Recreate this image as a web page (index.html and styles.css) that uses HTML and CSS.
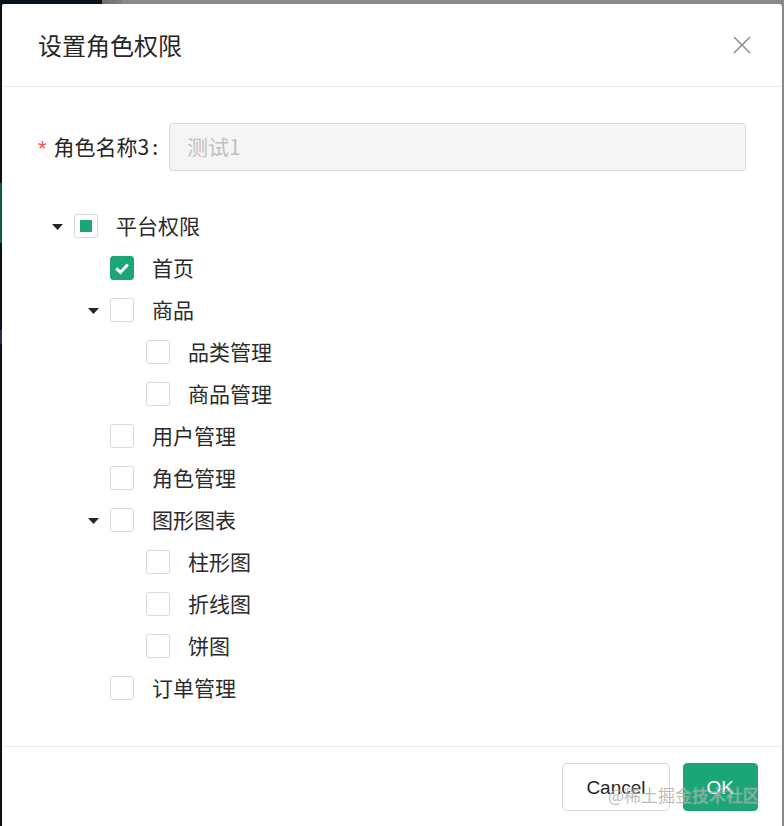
FILE: index.html
```html
<!DOCTYPE html>
<html lang="zh-CN">
<head>
<meta charset="utf-8">
<title>设置角色权限</title>
<link rel="stylesheet" href="styles.css">
</head>
<body>
<div class="screen">
  <div class="topbar"></div>
  <div class="stage">
    <div class="side"></div>
    <div class="modal">
      <div class="modal-header">
        <div class="title">设置角色权限</div>
        <span class="close" aria-label="Close">
          <svg width="18" height="18" viewBox="0 0 18 18"><path d="M1 1 L17 17 M17 1 L1 17" stroke="#8f8f8f" stroke-width="1.6" fill="none"/></svg>
        </span>
      </div>
      <div class="modal-body">
        <div class="form-item">
          <label class="label"><span class="req">*</span>角色名称3<span class="colon">:</span></label>
          <div class="input">测试1</div>
        </div>
        <ul class="tree">
          <li class="node">
            <span class="switcher"><svg width="11" height="6" viewBox="0 0 11 6"><path d="M0 0 H11 L5.5 6 Z" fill="#262626"/></svg></span>
            <span class="cb indeterminate"></span>
            <span class="node-title">平台权限</span>
          </li>
          <li class="node">
            <span class="indent"></span><span class="switcher"></span>
            <span class="cb checked"><svg width="24" height="24" viewBox="0 0 24 24"><path d="M6.2 12.4 L10.4 16.4 L17.8 8.4" stroke="#fff" stroke-width="3" fill="none"/></svg></span>
            <span class="node-title">首页</span>
          </li>
          <li class="node">
            <span class="indent"></span>
            <span class="switcher"><svg width="11" height="6" viewBox="0 0 11 6"><path d="M0 0 H11 L5.5 6 Z" fill="#262626"/></svg></span>
            <span class="cb"></span>
            <span class="node-title">商品</span>
          </li>
          <li class="node">
            <span class="indent"></span><span class="indent"></span><span class="switcher"></span>
            <span class="cb"></span>
            <span class="node-title">品类管理</span>
          </li>
          <li class="node">
            <span class="indent"></span><span class="indent"></span><span class="switcher"></span>
            <span class="cb"></span>
            <span class="node-title">商品管理</span>
          </li>
          <li class="node">
            <span class="indent"></span><span class="switcher"></span>
            <span class="cb"></span>
            <span class="node-title">用户管理</span>
          </li>
          <li class="node">
            <span class="indent"></span><span class="switcher"></span>
            <span class="cb"></span>
            <span class="node-title">角色管理</span>
          </li>
          <li class="node">
            <span class="indent"></span>
            <span class="switcher"><svg width="11" height="6" viewBox="0 0 11 6"><path d="M0 0 H11 L5.5 6 Z" fill="#262626"/></svg></span>
            <span class="cb"></span>
            <span class="node-title">图形图表</span>
          </li>
          <li class="node">
            <span class="indent"></span><span class="indent"></span><span class="switcher"></span>
            <span class="cb"></span>
            <span class="node-title">柱形图</span>
          </li>
          <li class="node">
            <span class="indent"></span><span class="indent"></span><span class="switcher"></span>
            <span class="cb"></span>
            <span class="node-title">折线图</span>
          </li>
          <li class="node">
            <span class="indent"></span><span class="indent"></span><span class="switcher"></span>
            <span class="cb"></span>
            <span class="node-title">饼图</span>
          </li>
          <li class="node">
            <span class="indent"></span><span class="switcher"></span>
            <span class="cb"></span>
            <span class="node-title">订单管理</span>
          </li>
        </ul>
      </div>
      <div class="modal-footer">
        <button class="btn">Cancel</button>
        <button class="btn primary">OK</button>
      </div>
      <div class="watermark">@稀土掘金技术社区</div>
    </div>
    <div class="rside"></div>
  </div>
</div>
</body>
</html>
```

FILE: styles.css
```css
* { box-sizing: border-box; }
html, body { margin: 0; padding: 0; }
body {
  width: 784px;
  height: 826px;
  overflow: hidden;
  background: #8a8a8a;
  font-family: "Noto Sans CJK SC", "Noto Sans", sans-serif;
}
.screen {
  width: 784px;
  height: 826px;
  display: flex;
  flex-direction: column;
  overflow: hidden;
}
.topbar {
  height: 4px;
  flex: none;
  background: linear-gradient(to right, #07111a 0, #07111a 102px, #6f6f6f 102px, #7e7e7e 122px, #8a8a8a 122px, #8a8a8a 100%);
}
.stage {
  flex: 1;
  display: flex;
  min-height: 0;
}
.side {
  width: 2px;
  flex: none;
  background: linear-gradient(to bottom, #07111a 0, #07111a 179px, #14584a 179px, #14584a 239px, #07111a 239px, #07111a 326px, #2a2f5a 326px, #2a2f5a 340px, #07111a 340px);
}
.rside {
  width: 2px;
  flex: none;
  background: #8a8a8a;
}
.modal {
  width: 780px;
  flex: none;
  background: #fff;
  border-radius: 3px 3px 0 0;
  position: relative;
  display: flex;
  flex-direction: column;
}
.modal-header {
  height: 83px;
  flex: none;
  display: flex;
  align-items: center;
  padding: 0 31px 0 36px;
  border-bottom: 1px solid #ebebeb;
}
.title {
  flex: 1;
  font-size: 24px;
  line-height: 33px;
  color: #262626;
  padding-bottom: 1px;
}
.close {
  display: flex;
  width: 18px;
  height: 18px;
}
.modal-body {
  padding: 36px 36px 37px 36px;
  flex: none;
}
.form-item {
  display: flex;
  align-items: center;
  height: 48px;
}
.label {
  width: 131px;
  flex: none;
  display: flex;
  align-items: center;
  font-size: 21px;
  line-height: 30px;
  color: #262626;
  white-space: nowrap;
  padding-bottom: 2px;
}
.req {
  color: #ff4d4f;
  font-family: "Liberation Sans", sans-serif;
  font-size: 22px;
  margin-right: 7px;
  position: relative;
  top: 3px;
}
.colon {
  margin-left: 3px;
}
.input {
  flex: none;
  width: 577px;
  height: 48px;
  border: 1px solid #d9d9d9;
  border-radius: 3px;
  background: #f5f5f5;
  color: #bfbfbf;
  font-size: 21px;
  line-height: 44px;
  padding: 0 17px;
}
.tree {
  list-style: none;
  margin: 34px 0 0 0;
  padding: 0;
}
.node {
  display: flex;
  align-items: center;
  height: 42px;
}
.indent {
  width: 36px;
  flex: none;
}
.switcher {
  width: 36px;
  height: 24px;
  flex: none;
  display: flex;
  align-items: center;
  justify-content: center;
  padding-left: 2px;
  padding-top: 1px;
}
.cb {
  width: 24px;
  height: 24px;
  flex: none;
  border: 1px solid #d9d9d9;
  border-radius: 3px;
  background: #fff;
  margin-right: 12px;
  display: flex;
  align-items: center;
  justify-content: center;
  position: relative;
}
.cb.indeterminate::after {
  content: "";
  width: 12px;
  height: 12px;
  background: #1da57a;
}
.cb.checked {
  background: #1da57a;
  border-color: #1da57a;
}
.cb.checked svg {
  position: absolute;
  left: -1px;
  top: -1px;
}
.node-title {
  padding-left: 6px;
  padding-bottom: 3px;
  font-size: 21px;
  line-height: 30px;
  color: #2b2b2b;
  white-space: nowrap;
}
.modal-footer {
  flex: 1;
  border-top: 1px solid #ebebeb;
  padding: 16px 24px 0 0;
  display: flex;
  justify-content: flex-end;
  align-items: flex-start;
  gap: 13px;
}
.btn {
  height: 48px;
  padding: 2px 23px 0 23px;
  border: 1px solid #d9d9d9;
  border-radius: 4px;
  background: #fff;
  color: #262626;
  font-family: "Liberation Sans", sans-serif;
  font-size: 19px;
  line-height: 44px;
}
.btn.primary {
  background: #1da57a;
  border-color: #1da57a;
  color: #fff;
}
.watermark {
  position: absolute;
  right: 22px;
  bottom: 19px;
  font-size: 17px;
  line-height: 24px;
  color: rgba(120, 120, 120, 0.5);
  text-shadow: 0 0 1px rgba(255, 255, 255, 0.7);
  white-space: nowrap;
  pointer-events: none;
}
```
